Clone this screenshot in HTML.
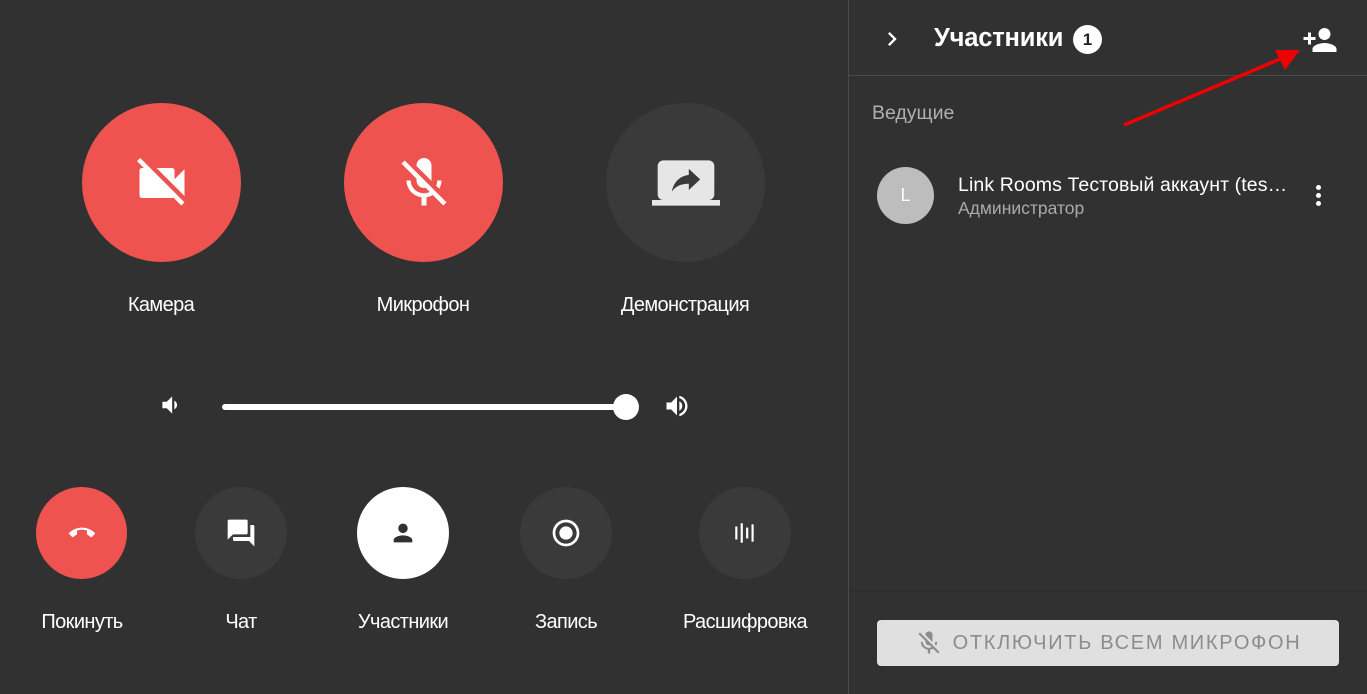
<!DOCTYPE html>
<html><head><meta charset="utf-8"><style>
*{margin:0;padding:0;box-sizing:border-box}
body{width:1367px;height:694px;background:#313131;font-family:"Liberation Sans",sans-serif;color:#fff;position:relative;overflow:hidden}
.a{position:absolute}
.c{position:absolute;border-radius:50%;display:flex;align-items:center;justify-content:center}
.lbl{position:absolute;font-size:20px;letter-spacing:-0.6px;transform:translateX(-50%);white-space:nowrap;color:#fff}
</style></head><body>
<div class="c" style="left:82px;top:103px;width:159px;height:159px;background:#ef5350">
<svg width="60" height="60" viewBox="0 0 24 24" fill="#fff"><path d="M21 6.5l-4 4V7c0-.55-.45-1-1-1H9.82L21 17.18V6.5zM3.27 2L2 3.27 4.73 6H4c-.55 0-1 .45-1 1v10c0 .55.45 1 1 1h12c.21 0 .39-.08.54-.18L19.73 21 21 19.730 3.27 2z"/></svg></div>
<div class="c" style="left:344px;top:103px;width:159px;height:159px;background:#ef5350">
<svg width="60" height="60" viewBox="0 0 24 24" fill="#fff"><path d="M19 11h-1.7c0 .74-.16 1.43-.43 2.05l1.23 1.23c.56-.98.9-2.09.9-3.28zm-4.02.17c0-.06.02-.11.02-.17V5c0-1.66-1.34-3-3-3S9 3.34 9 5v.18l5.98 5.99zM4.27 3L3 4.27l6.01 6.01V11c0 1.66 1.33 3 2.99 3 .22 0 .44-.03.65-.08l1.66 1.66c-.71.33-1.5.52-2.31.52-2.76 0-5.3-2.1-5.3-5.1H5c0 3.41 2.72 6.23 6 6.72V21h2v-3.28c.91-.13 1.770-.45 2.54-.9L19.73 21 21 19.73 4.27 3z"/></svg></div>
<div class="c" style="left:606px;top:103px;width:159px;height:159px;background:#3a3a3a">
<svg width="68" height="68" viewBox="0 0 24 24" fill="#e6e6e6"><path d="M20 18c1.1 0 1.99-.9 1.99-2L22 6c0-1.11-.9-2-2-2H4c-1.11 0-2 .89-2 2v10c0 1.1.89 2 2 2H0v2h24v-2h-4zm-7-3.53v-2.19c-2.78 0-4.61.85-6 2.72.56-2.67 2.11-5.33 6-5.87V7l4 3.73-4 3.74z"/></svg></div>
<div class="lbl" style="left:161px;top:294px">Камера</div>
<div class="lbl" style="left:423px;top:294px">Микрофон</div>
<div class="lbl" style="left:685px;top:294px">Демонстрация</div>
<svg class="a" style="left:157px;top:392px" width="26" height="26" viewBox="0 0 24 24" fill="#fff"><path d="M18.5 12c0-1.77-1.02-3.29-2.5-4.03v8.05c1.48-.73 2.5-2.25 2.5-4.02zM5 9v6h4l5 5V4L9 9H5z"/></svg>
<div class="a" style="left:222px;top:404px;width:404px;height:6px;background:#fff;border-radius:3px"></div>
<div class="a" style="left:613px;top:394px;width:26px;height:26px;background:#fff;border-radius:50%"></div>
<svg class="a" style="left:663px;top:392px" width="28" height="28" viewBox="0 0 24 24" fill="#fff"><path d="M3 9v6h4l5 5V4L7 9H3zm13.5 3c0-1.77-1.02-3.29-2.5-4.03v8.05c1.48-.73 2.5-2.25 2.5-4.02zM14 3.23v2.06c2.89.86 5 3.54 5 6.71s-2.11 5.85-5 6.71v2.06c4.01-.91 7-4.49 7-8.77s-2.99-7.86-7-8.77z"/></svg>
<div class="c" style="left:36px;top:487px;width:91px;height:92px;background:#ef5350">
<svg width="26" height="26" viewBox="0 0 24 24" fill="#fff"><path d="M12 9c-1.6 0-3.15.25-4.6.72v3.1c0 .39-.23.74-.56.9-.98.49-1.87 1.12-2.66 1.85-.18.18-.43.28-.7.28-.28 0-.53-.11-.71-.29L.29 13.08c-.18-.17-.29-.42-.29-.7 0-.28.11-.53.29-.71C3.34 8.78 7.46 7 12 7s8.66 1.78 11.71 4.67c.18.18.29.43.29.71 0 .28-.11.53-.29.71l-2.48 2.48c-.18.18-.43.29-.71.29-.27 0-.52-.11-.7-.28-.79-.74-1.69-1.36-2.67-1.85-.33-.16-.56-.5-.56-.9v-3.1C15.15 9.25 13.6 9 12 9z"/></svg></div>
<div class="c" style="left:195px;top:487px;width:92px;height:92px;background:#3a3a3a">
<svg width="32" height="32" viewBox="0 0 24 24" fill="#fff"><path d="M21 6h-2v9H6v2c0 .55.45 1 1 1h11l4 4V7c0-.55-.45-1-1-1zm-4 6V3c0-.55-.45-1-1-1H3c-.55 0-1 .45-1 1v14l4-4h10c.55 0 1-.45 1-1z"/></svg></div>
<div class="c" style="left:357px;top:487px;width:92px;height:92px;background:#fff">
<svg width="28" height="28" viewBox="0 0 24 24" fill="#313131"><path d="M12 12c2.21 0 4-1.79 4-4s-1.79-4-4-4-4 1.79-4 4 1.79 4 4 4zm0 2c-2.67 0-8 1.34-8 4v2h16v-2c0-2.66-5.33-4-8-4z"/></svg></div>
<div class="c" style="left:520px;top:487px;width:92px;height:92px;background:#3a3a3a">
<svg width="32" height="32" viewBox="0 0 24 24" fill="#fff"><path d="M12 7c-2.76 0-5 2.24-5 5s2.24 5 5 5 5-2.24 5-5-2.24-5-5-5zm0-5C6.48 2 2 6.48 2 12s4.48 10 10 10 10-4.48 10-10S17.52 2 12 2zm0 18c-4.42 0-8-3.58-8-8s3.58-8 8-8 8 3.58 8 8-3.58 8-8 8z"/></svg></div>
<div class="c" style="left:699px;top:487px;width:92px;height:92px;background:#3a3a3a">
<svg width="26" height="26" viewBox="0 0 24 24" fill="#fff"><rect x="3" y="6" width="2" height="12"/><rect x="8" y="3" width="2" height="18"/><rect x="13" y="7" width="2" height="10"/><rect x="18" y="4" width="2" height="16"/></svg></div>
<div class="lbl" style="left:82px;top:611px">Покинуть</div>
<div class="lbl" style="left:241px;top:611px">Чат</div>
<div class="lbl" style="left:403px;top:611px">Участники</div>
<div class="lbl" style="left:566px;top:611px">Запись</div>
<div class="lbl" style="left:745px;top:611px">Расшифровка</div>
<div class="a" style="left:848px;top:0;width:1px;height:694px;background:#4a4a4a"></div>
<div class="a" style="left:849px;top:75px;width:518px;height:1px;background:#4a4a4a"></div>
<div class="a" style="left:849px;top:591px;width:518px;height:1px;background:#2c2c2c"></div>
<svg class="a" style="left:878px;top:25px" width="28" height="28" viewBox="0 0 24 24" fill="#fff"><path d="M8.59 16.59L13.17 12 8.59 7.41 10 6l6 6-6 6z"/></svg>
<div class="a" style="left:934px;top:24px;font-size:25.5px;font-weight:bold;letter-spacing:-0.2px">Участники</div>
<div class="c" style="left:1073px;top:25px;width:29px;height:29px;background:#fff;color:#222;font-size:17px;font-weight:bold">1</div>
<svg class="a" style="left:1302px;top:22px" width="36" height="36" viewBox="0 0 24 24" fill="#fff"><path d="M15 12c2.21 0 4-1.79 4-4s-1.79-4-4-4-4 1.79-4 4 1.79 4 4 4zm-9-2V7H4v3H1v2h3v3h2v-3h3v-2H6zm9 4c-2.67 0-8 1.34-8 4v2h16v-2c0-2.66-5.33-4-8-4z"/></svg>
<svg class="a" style="left:1115px;top:40px" width="190" height="95"><line x1="9" y1="85" x2="170" y2="17" stroke="#e00" stroke-width="3.5"/><polygon points="185,10 160,10 170,30" fill="#e00"/></svg>
<div class="a" style="left:872px;top:102px;font-size:19.5px;color:#b0b0b0">Ведущие</div>
<div class="c" style="left:877px;top:167px;width:57px;height:57px;background:#bdbdbd;font-size:18px">L</div>
<div class="a" style="left:958px;top:174px;font-size:19.5px;letter-spacing:0.1px;white-space:nowrap">Link Rooms Тестовый аккаунт (tes…</div>
<div class="a" style="left:958px;top:198px;font-size:17.5px;color:#aaa">Администратор</div>
<div class="a" style="left:1316px;top:185px;width:5px;height:5px;border-radius:50%;background:#fff;box-shadow:0 8px 0 #fff,0 16px 0 #fff"></div>
<div class="a" style="left:877px;top:620px;width:462px;height:46px;background:#e0e0e0;border-radius:4px;display:flex;align-items:center;justify-content:center;color:#8c8c8c;font-size:20px;letter-spacing:1.7px;gap:10px">
<svg width="28" height="28" viewBox="0 0 24 24" fill="#8c8c8c"><path d="M19 11h-1.7c0 .74-.16 1.43-.43 2.05l1.23 1.23c.56-.98.9-2.09.9-3.28zm-4.02.17c0-.06.02-.11.02-.17V5c0-1.66-1.34-3-3-3S9 3.34 9 5v.18l5.98 5.99zM4.27 3L3 4.27l6.01 6.01V11c0 1.66 1.33 3 2.99 3 .22 0 .44-.03.65-.08l1.66 1.66c-.71.33-1.5.52-2.31.52-2.76 0-5.3-2.1-5.3-5.1H5c0 3.41 2.72 6.23 6 6.72V21h2v-3.28c.91-.13 1.77-.45 2.54-.9L19.73 21 21 19.73 4.27 3z"/></svg>
<span>ОТКЛЮЧИТЬ ВСЕМ МИКРОФОН</span></div>
</body></html>
